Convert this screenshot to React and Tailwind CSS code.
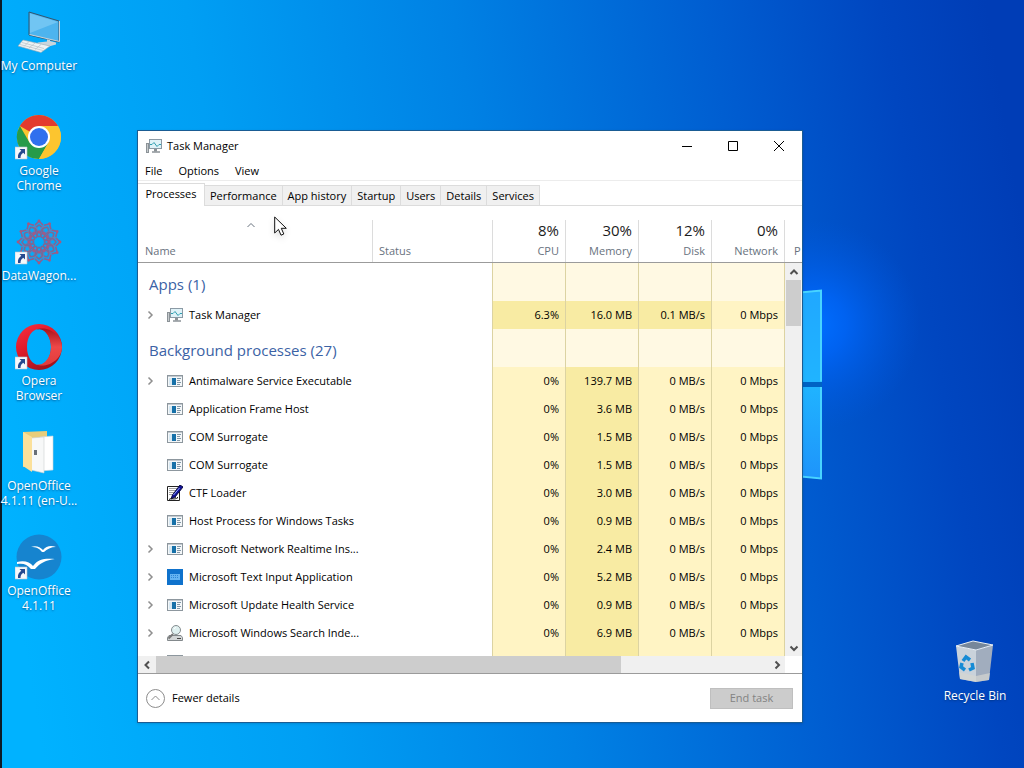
import React from 'react';

const processes = [
    { name: 'Antimalware Service Executable', icon: 'exe', open: true, mem: '139.7 MB' },
    { name: 'Application Frame Host', icon: 'exe', mem: '3.6 MB' },
    { name: 'COM Surrogate', icon: 'exe', mem: '1.5 MB' },
    { name: 'COM Surrogate', icon: 'exe', mem: '1.5 MB' },
    { name: 'CTF Loader', icon: 'ctf', mem: '3.0 MB' },
    { name: 'Host Process for Windows Tasks', icon: 'exe', mem: '0.9 MB' },
    { name: 'Microsoft Network Realtime Ins...', icon: 'exe', open: true, mem: '2.4 MB' },
    { name: 'Microsoft Text Input Application', icon: 'input', open: true, mem: '5.2 MB' },
    { name: 'Microsoft Update Health Service', icon: 'exe', open: true, mem: '0.9 MB' },
    { name: 'Microsoft Windows Search Inde...', icon: 'search', open: true, mem: '6.9 MB' },
];

const tabs = ['Performance', 'App history', 'Startup', 'Users', 'Details', 'Services'];

const MonitorIcon = () => (
    <svg width="16" height="16" viewBox="0 0 16 16" fill="none" className="shrink-0">
        <rect x="0.5" y="5.5" width="2" height="9" fill="#c5cacd" stroke="#8b9297" />
        <rect x="3.5" y="1.5" width="12" height="9" fill="#dff2f8" stroke="#8b9aa5" />
        <path d="M4 6.5h2l2-2 3 4 2-2h2" stroke="#2f9fb0" />
        <path d="M9.5 11v2.5" stroke="#8b9297" strokeWidth="3" />
        <path d="M6 14h8" stroke="#8b9297" strokeWidth="1.5" />
    </svg>
);

const ExeIcon = () => (
    <svg width="16" height="16" viewBox="0 0 16 16" fill="none" shapeRendering="crispEdges" className="shrink-0">
        <path d="M0 2h16v12H0z" fill="#8d979e" />
        <path d="M1 3h14v10H1z" fill="#f4f7f9" />
        <path d="M1 3h14v1H1z" fill="#c3cad0" />
        <path d="M2 5h3v7H2z" fill="#d8e9f3" />
        <path d="M5 5h4v7H5z" fill="#1670a8" />
        <path d="M10 5h4v1h-4zM10 7h3v1h-3zM10 9h4v1h-4zM10 11h3v1h-3z" fill="#8197a6" />
    </svg>
);

const CtfIcon = () => (
    <svg width="16" height="16" viewBox="0 0 16 16" fill="none" className="shrink-0">
        <path d="M.5 1.5h12v14H.5z" fill="#fff" stroke="#222" />
        <path d="M2.5 3.5h8M2.5 5.5h7M2.5 7.5h5M2.5 9.5h3M8 12.5h3" stroke="#444" strokeDasharray="1 1" />
        <path d="M13 0l3 2-8 10-4 2 1.500-4z" fill="#10109a" stroke="#0a0a40" />
        <path d="M12.5 3l-6 7" stroke="#8fa4ff" />
        <path d="M2 14.5c3-2 5 1 9-2" stroke="#111" />
    </svg>
);

const InputIcon = () => (
    <svg width="16" height="16" viewBox="0 0 16 16" fill="none" className="shrink-0">
        <path d="M0 0h16v16H0z" fill="#0f72cc" />
        <rect x="3" y="5" width="10" height="6" fill="#65b4f2" />
        <path d="M4 6.5h8M4 8.5h8" stroke="#2d86d6" strokeDasharray="1 1" />
    </svg>
);

const SearchIcon = () => (
    <svg width="16" height="16" viewBox="0 0 16 16" fill="none" className="shrink-0">
        <path d="M2 10.5h12l1.500 2v3H.5v-3z" fill="#d2d5d6" stroke="#83898c" />
        <path d="M6 9L1.500 13.5" stroke="#777" strokeWidth="2" />
        <circle cx="9" cy="5" r="4.5" fill="#dff0f0" stroke="#858c8f" />
        <path d="M7 4a2.500 2.500 0 012-1.500" stroke="#fff" />
        <path d="M10 13.5h4" stroke="#444" />
    </svg>
);

const icons = { exe: ExeIcon, ctf: CtfIcon, input: InputIcon, search: SearchIcon, monitor: MonitorIcon };

const Chevron = ({ d, className }) => (
    <svg width="10" height="10" viewBox="0 0 10 10" fill="none" stroke="currentColor" className={className}>
        <path d={d} />
    </svg>
);

const UP = 'M1.5 7L5 3.5 8.5 7';
const DOWN = 'M1.5 3.5L5 7 8.5 3.5';
const LEFT = 'M7 1.5L3.5 5 7 8.5';
const RIGHT = 'M3.5 1.5L7 5 3.5 8.5';

const ShortcutArrow = () => (
    <g>
        <path d="M0 34h12v12H0z" fill="#f6f8fb" stroke="#b9c7d4" strokeWidth=".6" />
        <path d="M4.5 36H10v5.5L8.3 39.8C6.5 41 5.5 42.5 5.5 45H3c-.5-3 .8-5.5 3.3-7.2z" fill="#26498f" />
    </g>
);

const ComputerArt = () => (
    <svg width="48" height="48" viewBox="0 0 48 48">
        <path d="M14 4l30 9v21l-30-7z" fill="#4db4ee" stroke="#33546e" />
        <path d="M15 5.5l28 8.5-28 11z" fill="#8bd0f6" opacity=".6" />
        <path d="M44.5 13v20.5l-30-7" fill="none" stroke="#c7d3da" />
        <path d="M26 30l6 1.500v2l-9 1-2 2 9 3 11-3v-2l-6-1.500v-1" fill="#c9d5dc" />
        <path d="M8 32l27 6-9 6.500L3 38z" fill="#eef2f4" stroke="#9aa9b2" strokeWidth=".6" />
        <path d="M7 34.5l22 6M5 36.5l23 6M14 33.5l-5 5M20 35l-6 5M26 36.5l-6 5" stroke="#b5c0c6" strokeWidth=".7" />
    </svg>
);

const ChromeArt = () => (
    <svg width="48" height="48" viewBox="0 0 48 48">
        <circle cx="24" cy="24" r="22" fill="#fcc52f" />
        <path d="M24 24L4.900 13A22 22 0 0143 13H24z" fill="#e33b2e" />
        <path d="M4.900 13A22 22 0 0024 46l9.500-16.500L24 24l-9.500 5.500z" fill="#269b4a" />
        <path d="M24 13h19a22 22 0 01-19 33l9.500-16.500z" fill="#fcc52f" />
        <circle cx="24" cy="24" r="11" fill="#fff" />
        <circle cx="24" cy="24" r="9" fill="#3070ee" />
        <ShortcutArrow />
    </svg>
);

const petals = [0, 30, 60, 90, 120, 150, 180, 210, 240, 270, 300, 330];

const DataWagonArt = () => (
    <svg width="48" height="48" viewBox="0 0 48 48" fill="none">
        {petals.map((a) => (
            <g key={a} transform={`rotate(${a} 24 24)`}>
                <path d="M24 19c-5-4-5-9 0-12 5 3 5 8 0 12" stroke="#7d6795" strokeWidth="1.5" />
                <path d="M19 13c0-4 2-7 5-10 3 3 5 6 5 10" stroke="#6c7fb0" />
                <path d="M20 7l4-4 4 4" stroke="#8d5f90" strokeWidth="1.5" />
                <circle cx="24" cy="14" r="1.8" fill="#a05a88" />
                <circle cx="24" cy="3" r="1.4" fill="#a45a80" />
            </g>
        ))}
        <ShortcutArrow />
    </svg>
);

const OperaArt = () => (
    <svg width="48" height="48" viewBox="0 0 48 48">
        <defs>
            <linearGradient id="opera" x1="0" x2="0.6" y1="0" y2="1">
                <stop offset="0" stopColor="#fb3044" />
                <stop offset=".5" stopColor="#dd1a28" />
                <stop offset="1" stopColor="#a3121b" />
            </linearGradient>
            <linearGradient id="operaRight" x2="0" y2="1">
                <stop offset="0" stopColor="#a8141c" />
                <stop offset=".5" stopColor="#ee4848" />
                <stop offset="1" stopColor="#e03c3c" />
            </linearGradient>
        </defs>
        <path fillRule="evenodd" d="M24 1a23 23 0 100 46 23 23 0 000-46zm0 5c7 0 12 8 12 18s-5 18-12 18-12-8-12-18S17 6 24 6z" fill="url(#opera)" />
        <path d="M21 7c9-5 26 3 26 17S30 46 21 41c8 3 15-7 15-17S29 3 21 7z" fill="url(#operaRight)" />
        <ShortcutArrow />
    </svg>
);

const FolderArt = () => (
    <svg width="48" height="48" viewBox="0 0 48 48">
        <path d="M8 4l24-1v36H8z" fill="#e8cd7b" />
        <path d="M25 9l13-1v34l-13 1z" fill="#fff" stroke="#cfd4d6" strokeWidth=".6" />
        <path d="M16 10l13-1v36l-13-3z" fill="#f7f8f8" stroke="#cdd0d0" strokeWidth=".6" />
        <path d="M19 22h3v5h-3z" fill="#697078" />
        <path d="M8 4l9 5v35l-9-6z" fill="#fbe09a" />
    </svg>
);

const OpenOfficeArt = () => (
    <svg width="48" height="48" viewBox="0 0 48 48">
        <circle cx="24" cy="24" r="22.5" fill="#1684cf" />
        <path d="M16 14c5-2 9 0 12 3 3-4 8-5 13-3-5 0-9 2-12 5h-2c-3-4-6-5-11-5z" fill="#fff" />
        <path d="M2 29c7-2 13 0 16 4 5-7 12-8 22-7-9 1-15 4-20 10h-4C12 31 8 30 2 31z" fill="#fff" />
        <ShortcutArrow />
    </svg>
);

const BinArt = () => (
    <svg width="48" height="48" viewBox="0 0 48 48">
        <path d="M5 8l20 4v32L9 41z" fill="#c9d2db" />
        <path d="M25 12l17-5-4 35-13 2z" fill="#a1adbe" />
        <path d="M5 8l17-5 20 4-17 5z" fill="#76879a" stroke="#e9eff4" />
        <path d="M8 34l17 4 14-3-1 7-13 2-16-3z" fill="#d6d5d2" opacity=".7" />
        <g fill="none" stroke="#168bd5" strokeWidth="3.5">
            <path d="M12 23l3-4 4 3M21 25l1 5-4 2M14 32l-4-3 1-4" />
        </g>
    </svg>
);

const shortcuts = [
    { lines: ['My Computer'], art: ComputerArt },
    { lines: ['Google', 'Chrome'], art: ChromeArt },
    { lines: ['DataWagon...'], art: DataWagonArt },
    { lines: ['Opera', 'Browser'], art: OperaArt },
    { lines: ['OpenOffice', '4.1.11 (en-U...'], art: FolderArt },
    { lines: ['OpenOffice', '4.1.11'], art: OpenOfficeArt },
];

const Shortcut = ({ lines, art: Art }) => (
    <a href="#" className="flex h-[105px] w-[78px] flex-col items-center gap-[2px] pt-2 text-center text-[12px] leading-[15px] whitespace-nowrap text-white [text-shadow:0_1px_2px_rgba(0,40,90,0.6)]">
        <Art />
        <span>
            {lines.map((line) => (
                <span key={line} className="block">{line}</span>
            ))}
        </span>
    </a>
);

const Cell = ({ className, children }) => (
    <td className={`border-r border-[#dcd3a2] pr-[6px] text-right ${className}`}>{children}</td>
);

const GroupRow = ({ title }) => (
    <tr className="h-[38px]">
        <th scope="rowgroup" colSpan="2" className="border-r border-[#dcd3a2] pt-1 pl-[11px] text-left text-[15px] font-normal leading-5 text-[#3b62a5]">{title}</th>
        <Cell className="bg-[#fff9e3]" />
        <Cell className="bg-[#fff9e3]" />
        <Cell className="bg-[#fff9e3]" />
        <Cell className="bg-[#fff9e3]" />
        <td />
    </tr>
);

const ProcessRow = ({ name, icon, open, cpu = '0%', mem, disk = '0 MB/s', network = '0 Mbps', active }) => {
    const Icon = icons[icon];
    const tint = active ? 'bg-[#f8eba3]' : 'bg-[#fff4c4]';
    return (
        <tr className="h-7">
            <td>
                <div className="flex items-center whitespace-nowrap pl-[7px]">
                    <span className="w-[22px] shrink-0 text-[#8f8f8f]">
                        {open && (
                            <button type="button" aria-label={`Expand ${name}`} className="block">
                                <Chevron d={RIGHT} className="[stroke-width:1.5]" />
                            </button>
                        )}
                    </span>
                    {Icon && <Icon />}
                    <span className="pl-[6px]">{name}</span>
                </div>
            </td>
            <td className="border-r border-[#dcd3a2]" />
            <Cell className={tint}>{cpu}</Cell>
            <Cell className="bg-[#f8eba3]">{mem}</Cell>
            <Cell className={tint}>{disk}</Cell>
            <Cell className="bg-[#fff4c4]">{network}</Cell>
            <td />
        </tr>
    );
};

const UsageHeader = ({ value, label }) => (
    <th scope="col" className="p-0 pt-[14px] font-normal">
        <div className="flex h-[42px] flex-col border-r border-[#dcdcdc] pr-[6px] text-right">
            <span className="text-[15px] leading-5 text-[#1c1c1c]">{value}</span>
            <span className="leading-[22px] text-[#68727e]">{label}</span>
        </div>
    </th>
);

const ProcessTable = () => (
    <div className="relative h-[450px] overflow-hidden">
        <table className="w-full table-fixed border-separate border-spacing-0">
            <colgroup>
                <col className="w-[235px]" />
                <col className="w-[120px]" />
                <col className="w-[73px]" />
                <col className="w-[73px]" />
                <col className="w-[73px]" />
                <col className="w-[73px]" />
                <col />
            </colgroup>
            <thead>
                <tr className="h-[57px] [&>th]:border-b [&>th]:border-b-[#9b9b9b]">
                    <th scope="col" className="p-0 pt-[14px] text-left font-normal text-[#68727e]">
                        <div className="flex h-[42px] flex-col border-r border-[#dcdcdc] pl-[7px]">
                            <Chevron d={UP} className="mb-[10px] ml-[101px]" />
                            <span className="leading-[22px]">Name</span>
                        </div>
                    </th>
                    <th scope="col" className="p-0 pt-[14px] text-left font-normal text-[#68727e]">
                        <div className="flex h-[42px] flex-col border-r border-[#dcdcdc] pt-5 pl-[6px]">
                            <span className="leading-[22px]">Status</span>
                        </div>
                    </th>
                    <UsageHeader value="8%" label="CPU" />
                    <UsageHeader value="30%" label="Memory" />
                    <UsageHeader value="12%" label="Disk" />
                    <UsageHeader value="0%" label="Network" />
                    <th scope="col" className="p-0 pt-[14px] pl-[9px] text-left font-normal text-[#68727e]">
                        <div className="h-[42px] pt-5 leading-[22px]">P</div>
                    </th>
                </tr>
            </thead>
            <tbody>
                <GroupRow title="Apps (1)" />
                <ProcessRow name="Task Manager" icon="monitor" open active cpu="6.3%" mem="16.0 MB" disk="0.1 MB/s" />
                <GroupRow title="Background processes (27)" />
                {processes.map((p, i) => (
                    <ProcessRow key={i} {...p} />
                ))}
                <ProcessRow icon="exe" cpu="" disk="" network="" />
            </tbody>
        </table>
        <div className="absolute top-[57px] right-0 bottom-0 flex w-[17px] flex-col items-center justify-between bg-[#f0f0f0] text-[#505050]">
            <button type="button" aria-label="Scroll up" className="flex h-[17px] items-center">
                <Chevron d={UP} className="[stroke-width:2]" />
            </button>
            <div className="mb-auto h-[46px] w-[15px] bg-[#cdcdcd]" />
            <button type="button" aria-label="Scroll down" className="flex h-[17px] items-center">
                <Chevron d={DOWN} className="[stroke-width:2]" />
            </button>
        </div>
    </div>
);

const TaskManager = () => (
    <main className="absolute top-[130px] left-[137px] w-[666px] border border-[#1a5c93] bg-white text-black shadow-sm">
        <header className="flex h-[29px] items-center pl-2">
            <MonitorIcon />
            <h1 className="flex-1 pl-[5px]">Task Manager</h1>
            <button type="button" aria-label="Minimize" className="flex h-full w-[46px] items-center justify-center">
                <svg width="10" height="10" stroke="#000"><path d="M0 5.5h10" /></svg>
            </button>
            <button type="button" aria-label="Maximize" className="flex h-full w-[46px] items-center justify-center">
                <svg width="10" height="10" stroke="#000" fill="none"><path d="M.5.5h9v9h-9z" /></svg>
            </button>
            <button type="button" aria-label="Close" className="flex h-full w-[46px] items-center justify-center">
                <svg width="10" height="10" stroke="#000"><path d="M0 0l10 10M10 0L0 10" /></svg>
            </button>
        </header>
        <nav className="flex h-[21px] items-end gap-4 border-b border-[#ececec] pb-px pl-[7px]">
            <button type="button">File</button>
            <button type="button">Options</button>
            <button type="button">View</button>
        </nav>
        <div role="tablist" className="flex h-[25px] items-end">
            <button type="button" role="tab" aria-selected="true" className="h-[23px] w-[67px] border-t border-r border-[#dcdcdc] pb-[2px]">Processes</button>
            <div className="flex flex-1 border-b border-[#dcdcdc]">
                {tabs.map((tab) => (
                    <button key={tab} type="button" role="tab" aria-selected="false" className="h-5 border-t border-r border-[#dcdcdc] bg-[#f0f0f0] px-[5px] whitespace-nowrap">
                        {tab}
                    </button>
                ))}
            </div>
        </div>
        <ProcessTable />
        <div className="flex h-[17px] pr-[17px] text-[#505050]">
            <button type="button" aria-label="Scroll left" className="flex w-[18px] items-center justify-center bg-[#f0f0f0]">
                <Chevron d={LEFT} className="[stroke-width:2]" />
            </button>
            <div className="flex flex-1 bg-[#f0f0f0]">
                <div className="w-[76%] bg-[#cdcdcd]" />
            </div>
            <button type="button" aria-label="Scroll right" className="flex w-[17px] items-center justify-center bg-[#f0f0f0]">
                <Chevron d={RIGHT} className="[stroke-width:2]" />
            </button>
        </div>
        <footer className="flex h-[49px] items-center justify-between border-t border-[#9b9b9b] pr-[9px] pl-2">
            <button type="button" className="flex items-center gap-[7px]">
                <svg width="19" height="19" viewBox="0 0 19 19" fill="none" stroke="#8c8c8c">
                    <circle cx="9.5" cy="9.5" r="9" />
                    <path d="M5.5 11l4-4 4 4" />
                </svg>
                Fewer details
            </button>
            <button type="button" disabled className="h-[21px] w-[83px] border border-[#bfbfbf] bg-[#cccccc] text-[#838383]">End task</button>
        </footer>
    </main>
);

const Pointer = () => (
    <svg width="14" height="21" viewBox="0 0 14 21" aria-hidden="true" className="pointer-events-none absolute top-[216px] left-[274px] drop-shadow-md">
        <path d="M.7 1v16l3.8-3.6 2.5 5.8 2.8-1.2-2.5-5.7h5z" fill="#fff" stroke="#111" />
    </svg>
);

const Wallpaper = () => (
    <svg className="absolute inset-0 h-full w-full" viewBox="0 0 1024 768" preserveAspectRatio="none" aria-hidden="true">
        <defs>
            <linearGradient id="sky" gradientUnits="userSpaceOnUse" x1="0" y1="500" x2="1040" y2="330">
                <stop offset="0" stopColor="#00b2ff" />
                <stop offset=".25" stopColor="#009ff4" />
                <stop offset=".5" stopColor="#0081e4" />
                <stop offset=".75" stopColor="#005cd0" />
                <stop offset=".9" stopColor="#0046c0" />
                <stop offset="1" stopColor="#003db6" />
            </linearGradient>
            <radialGradient id="glow" gradientUnits="userSpaceOnUse" cx="815" cy="325" r="105">
                <stop offset="0" stopColor="#006eff" />
                <stop offset=".3" stopColor="#0066fa" stopOpacity=".8" />
                <stop offset="1" stopColor="#0058e0" stopOpacity="0" />
            </radialGradient>
            <linearGradient id="pane" x2="0" y2="1">
                <stop offset="0" stopColor="#20a8ff" />
                <stop offset=".5" stopColor="#20b4ff" />
                <stop offset="1" stopColor="#1e94fb" />
            </linearGradient>
        </defs>
        <path d="M0 0h1024v768H0z" fill="url(#sky)" />
        <path d="M0 0h1024v768H0z" fill="url(#glow)" />
        <path d="M740 298l82-8v92h-82zM740 387h82v92l-82-8z" fill="url(#pane)" />
        <path d="M740 382h82v5h-82z" fill="#0062c4" />
        <path d="M740 298l81-7.5v91M821 387v91.500l-81-8" fill="none" stroke="#48d4ff" strokeWidth="2" />
        <path d="M0 0h2v768H0z" fill="#0b1a28" />
    </svg>
);

export default function App() {
    return (
        <div className="relative flex min-h-screen items-start justify-between overflow-hidden bg-[#006ad6] font-['Open_Sans',sans-serif] text-[11px] leading-4">
            <Wallpaper />
            <div className="relative flex flex-col">
                {shortcuts.map((s, i) => (
                    <Shortcut key={i} {...s} />
                ))}
            </div>
            <div className="relative mr-[10px] self-end pb-[33px]">
                <Shortcut lines={['Recycle Bin']} art={BinArt} />
            </div>
            <TaskManager />
            <Pointer />
        </div>
    );
}
